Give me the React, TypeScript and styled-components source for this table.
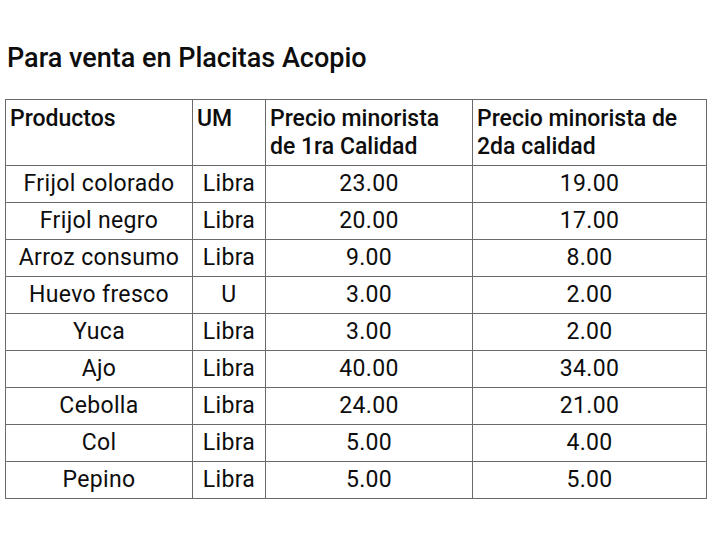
import React from "react";
import styled, { createGlobalStyle } from "styled-components";

const Global = createGlobalStyle`
  html, body { margin: 0; padding: 0; background: #fff; }
  body { font-family: Roboto, "Noto Sans", sans-serif; color: #111; }
`;

const Page = styled.div`
  padding: 40px 5px 0 5px;
  width: 713px;
  box-sizing: border-box;
`;

const Title = styled.h1`
  margin: 0 0 0 2px;
  font-size: 27px;
  font-weight: 500;
  line-height: 36px;
  color: #0d0d0d;
`;

const Table = styled.table`
  margin-top: 23px;
  border-collapse: collapse;
  width: 701px;
  table-layout: fixed;
  font-size: 23px;
  letter-spacing: 0.35px;
`;

const Th = styled.th<{ $w: number }>`
  width: ${(p) => p.$w}px;
  border: 1.5px solid #6a6a6a;
  text-align: left;
  vertical-align: top;
  font-weight: 500;
  line-height: 28px;
  padding: 5px 4px 4px 4px;
  height: 66px;
  box-sizing: border-box;
  letter-spacing: 0;
  color: #0d0d0d;
`;

const Td = styled.td`
  border: 1.5px solid #6a6a6a;
  text-align: center;
  font-weight: 400;
  height: 37px;
  padding: 0 4px;
  line-height: 28px;
  box-sizing: border-box;
  color: #0d0d0d;
`;

const rows: [string, string, string, string][] = [
  ["Frijol colorado", "Libra", "23.00", "19.00"],
  ["Frijol negro", "Libra", "20.00", "17.00"],
  ["Arroz consumo", "Libra", "9.00", "8.00"],
  ["Huevo fresco", "U", "3.00", "2.00"],
  ["Yuca", "Libra", "3.00", "2.00"],
  ["Ajo", "Libra", "40.00", "34.00"],
  ["Cebolla", "Libra", "24.00", "21.00"],
  ["Col", "Libra", "5.00", "4.00"],
  ["Pepino", "Libra", "5.00", "5.00"],
];

export default function App() {
  return (
    <Page>
      <Global />
      <Title>Para venta en Placitas Acopio</Title>
      <Table>
        <thead>
          <tr>
            <Th $w={187}>Productos</Th>
            <Th $w={73}>UM</Th>
            <Th $w={207}>Precio minorista de 1ra Calidad</Th>
            <Th $w={234}>Precio minorista de 2da calidad</Th>
          </tr>
        </thead>
        <tbody>
          {rows.map((r) => (
            <tr key={r[0]}>
              {r.map((c, i) => (
                <Td key={i}>{c}</Td>
              ))}
            </tr>
          ))}
        </tbody>
      </Table>
    </Page>
  );
}
